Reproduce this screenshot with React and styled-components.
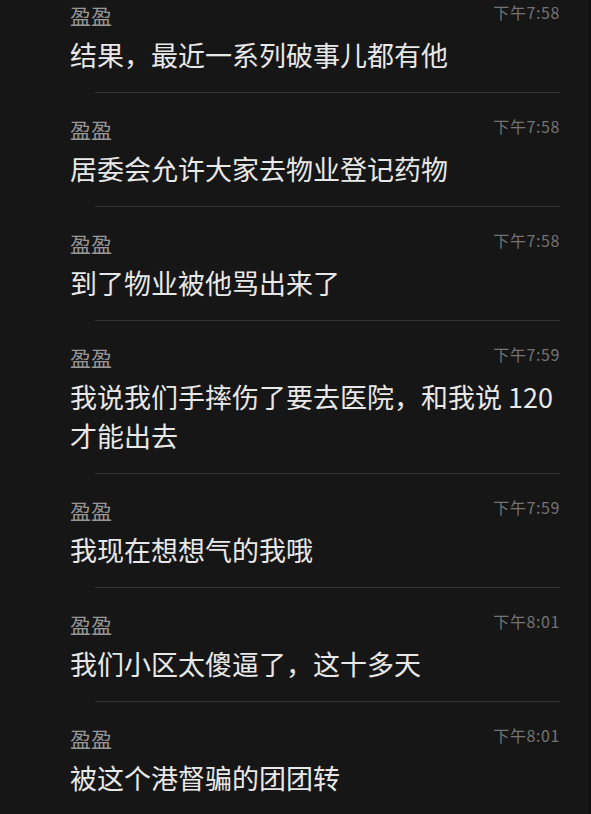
import styled, { createGlobalStyle } from 'styled-components';

const GlobalStyle = createGlobalStyle`
    html, body {
        margin: 0;
        padding: 0;
        background: #161616;
    }
    body {
        font-family: "Noto Sans CJK SC", "Noto Sans", sans-serif;
        overflow: hidden;
    }
`;

const Screen = styled.div`
    width: 591px;
    height: 814px;
    background: #161616;
    overflow: hidden;
    border-right: 3px solid #101010;
    box-sizing: border-box;
`;

const List = styled.div`
    display: flex;
    flex-direction: column;
    margin-top: -21px;
`;

const Row = styled.div`
    display: flex;
    flex-direction: column;
`;

const Body = styled.div`
    padding: 22px 28px 18px 70px;
    display: flex;
    flex-direction: column;
    gap: 6px;
`;

const Header = styled.div`
    display: flex;
    justify-content: space-between;
    align-items: flex-start;
`;

const Name = styled.div`
    font-size: 21px;
    line-height: 28px;
    color: #969696;
`;

const Time = styled.div`
    font-size: 16px;
    line-height: 22px;
    color: #737373;
    letter-spacing: 0.6px;
`;

const Message = styled.div`
    font-size: 27px;
    line-height: 39px;
    color: #e8e8e8;
    white-space: pre-line;
`;

const Divider = styled.div`
    height: 1px;
    margin: 0 28px 0 95px;
    background: #343434;
`;

const messages = [
    { time: '下午7:58', text: '结果，最近一系列破事儿都有他' },
    { time: '下午7:58', text: '居委会允许大家去物业登记药物' },
    { time: '下午7:58', text: '到了物业被他骂出来了' },
    { time: '下午7:59', text: '我说我们手摔伤了要去医院，和我说 120\n才能出去' },
    { time: '下午7:59', text: '我现在想想气的我哦' },
    { time: '下午8:01', text: '我们小区太傻逼了，这十多天' },
    { time: '下午8:01', text: '被这个港督骗的团团转' },
];

export default function App() {
    return <>
        <GlobalStyle />
        <Screen>
            <List>
                {messages.map((m, i) => (
                    <Row key={i}>
                        <Body>
                            <Header>
                                <Name>盈盈</Name>
                                <Time>{m.time}</Time>
                            </Header>
                            <Message>{m.text}</Message>
                        </Body>
                        <Divider />
                    </Row>
                ))}
            </List>
        </Screen>
    </>
}
